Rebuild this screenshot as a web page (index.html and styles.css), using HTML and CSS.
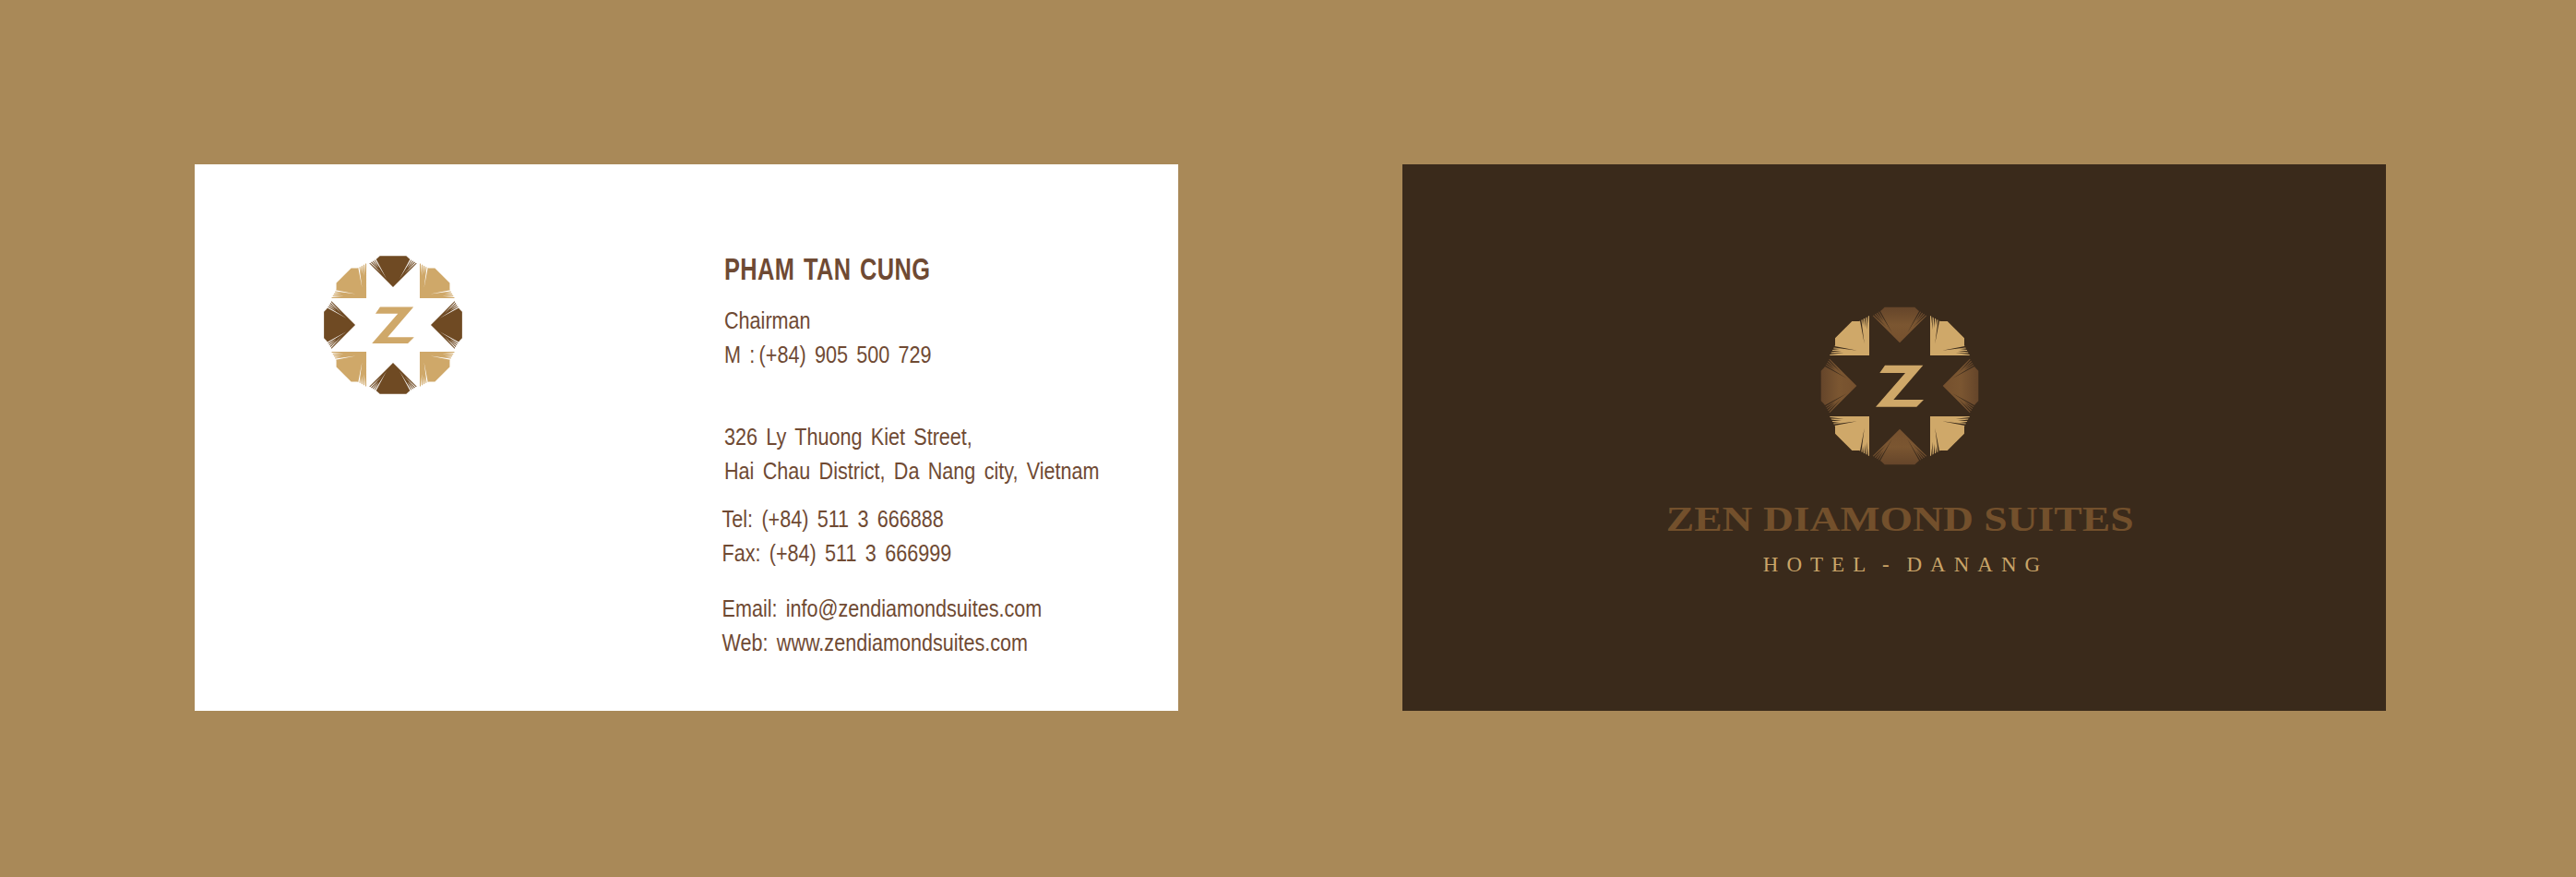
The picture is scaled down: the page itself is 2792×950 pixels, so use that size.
FILE: index.html
```html
<!DOCTYPE html>
<html lang="en">
<head>
<meta charset="utf-8">
<title>Zen Diamond Suites business card</title>
<link rel="stylesheet" href="styles.css">
</head>
<body>
<main class="sheet">
  <section class="card card-front">
    <svg class="logo logo-small" viewBox="-90 -90 180 180" aria-label="Zen Diamond Suites logo">
      <defs>
        <path id="diamond" d="M0,-46.7 L29.3,-76 L28.4,-76.6 L14,-63.5 L27.2,-77.3 L26.3,-77.9 L19,-70 L25.1,-78.6 L24.2,-79.2 L17.5,-70 L23,-79.9 L22.2,-80.4 L8,-57 L21,-81.1 L20,-81.7 L16.3,-85.3 L-16.3,-85.3 L-20,-81.7 L-21,-81.1 L-8,-57 L-22.2,-80.4 L-23,-79.9 L-17.5,-70 L-24.2,-79.2 L-25.1,-78.6 L-19,-70 L-26.3,-77.9 L-27.2,-77.3 L-14,-63.5 L-28.4,-76.6 L-29.3,-76 Z"/>
        <path id="corner" d="M33,-33 L33,-76 L34.1,-75.4 L35.7,-60.7 L35.5,-74.6 L36.6,-74 L38,-63 L38,-73.3 L39.1,-72.7 L40,-65 L40.5,-71.9 L41.6,-71.3 L38.3,-46 L43,-70.5 L44,-70 L51.7,-70 L70,-51.7 L70,-44 L70.5,-43 L46,-38.3 L71.3,-41.6 L71.9,-40.5 L65,-40 L72.7,-39.1 L73.3,-38 L63,-38 L74,-36.6 L74.6,-35.5 L60.7,-35.7 L75.4,-34.1 L76,-33 Z"/>
        <path id="zed" d="M-16,-22.3 L25.3,-22.3 L-6.7,15 L26,15 L18.3,22.7 L-26,22.7 L6,-14 L-21.7,-14 Z"/>
        <linearGradient id="bronze" x1="0" y1="0" x2="0" y2="1">
          <stop offset="0" stop-color="#65452a"/>
          <stop offset="0.5" stop-color="#7b5631"/>
          <stop offset="1" stop-color="#75502e"/>
        </linearGradient>
      </defs>
      <g class="dark-piece">
        <use href="#diamond"/>
        <use href="#diamond" transform="rotate(90)"/>
        <use href="#diamond" transform="rotate(180)"/>
        <use href="#diamond" transform="rotate(270)"/>
      </g>
      <g class="gold-piece">
        <use href="#corner"/>
        <use href="#corner" transform="rotate(90)"/>
        <use href="#corner" transform="rotate(180)"/>
        <use href="#corner" transform="rotate(270)"/>
        <use href="#zed"/>
      </g>
    </svg>
    <div class="details">
      <h1 class="name">PHAM TAN CUNG</h1>
      <div class="block block-role">
        <p>Chairman</p>
        <p>M :&#8201;(+84) 905 500 729</p>
      </div>
      <div class="block block-address">
        <p>326 Ly Thuong Kiet Street,</p>
        <p>Hai Chau District, Da Nang city, Vietnam</p>
      </div>
      <div class="block block-phone">
        <p>Tel: (+84) 511 3 666888</p>
        <p>Fax: (+84) 511 3 666999</p>
      </div>
      <div class="block block-web">
        <p>Email: info@zendiamondsuites.com</p>
        <p>Web: www.zendiamondsuites.com</p>
      </div>
    </div>
  </section>
  <section class="card card-back">
    <svg class="logo logo-large" viewBox="-90 -90 180 180" aria-label="Zen Diamond Suites logo">
      <g class="bronze-piece">
        <use href="#diamond"/>
        <use href="#diamond" transform="rotate(90)"/>
        <use href="#diamond" transform="rotate(180)"/>
        <use href="#diamond" transform="rotate(270)"/>
      </g>
      <g class="gold-piece">
        <use href="#corner"/>
        <use href="#corner" transform="rotate(90)"/>
        <use href="#corner" transform="rotate(180)"/>
        <use href="#corner" transform="rotate(270)"/>
        <use href="#zed"/>
      </g>
    </svg>
    <h2 class="brand">ZEN DIAMOND SUITES</h2>
    <p class="tagline">HOTEL - DANANG</p>
  </section>
</main>
</body>
</html>
```
FILE: styles.css
```css
* { box-sizing: border-box; }
html, body { margin: 0; height: 100%; }
body { background: #a98958; overflow: hidden; }
.sheet {
  display: flex;
  gap: 243px;
  padding: 178px 0 0 211px;
}
.card { width: 1066px; height: 592px; flex: none; }
.logo { display: block; flex: none; }
.gold-piece { fill: #cfa869; }
.dark-piece { fill: #6f4a23; }
.bronze-piece { fill: url(#bronze); }

.card-front {
  background: #fff;
  display: flex;
  align-items: flex-start;
  padding: 95px 0 0 136px;
  color: #6f4a33;
  font-family: "Liberation Sans", sans-serif;
}
.logo-small { width: 158px; height: 158px; }
.details {
  margin: 0 0 0 280px;
  font-size: 26px;
  line-height: 37px;
  word-spacing: 4px;
  transform: scaleX(.83);
  transform-origin: left top;
}
.details p { margin: 0; white-space: nowrap; }
.name {
  margin: 0;
  font-size: 34px;
  line-height: 37px;
  font-weight: 700;
  letter-spacing: .5px;
  word-spacing: 3px;
  transform: scaleX(.9);
  transform-origin: left top;
}
.block-role { margin-top: 19px; }
.block-address { margin-top: 52px; }
.block-phone { margin: 15px 0 0 -3px; }
.block-web { margin: 23px 0 0 -3px; }

.card-back {
  background: #3a2a1b;
  display: flex;
  flex-direction: column;
  align-items: center;
  padding: 150px 0 0 12px;
  font-family: "Liberation Serif", serif;
}
.logo-large { width: 180px; height: 180px; }
.brand {
  margin: 32px 0 0;
  color: #73502c;
  font-size: 38px;
  line-height: 44px;
  font-weight: 700;
  white-space: nowrap;
  transform: scaleX(1.2);
}
.tagline {
  margin: 14px 0 0 13px;
  color: #c9a468;
  font-size: 23px;
  line-height: 28px;
  letter-spacing: 9px;
  word-spacing: -5px;
  white-space: nowrap;
}
```
